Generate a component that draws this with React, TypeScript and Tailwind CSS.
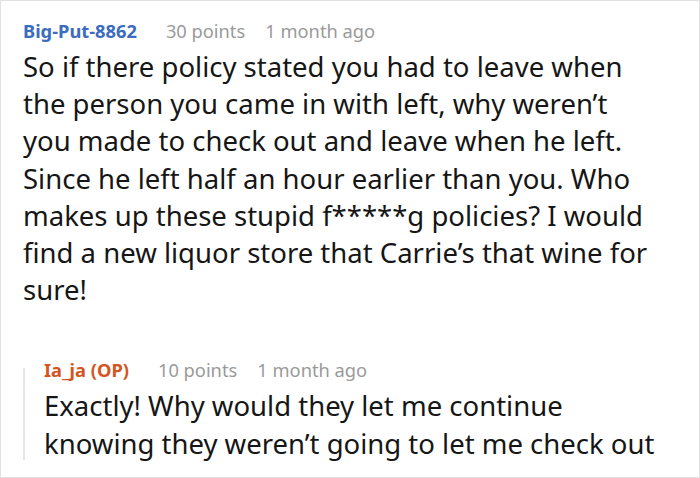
import React from 'react';

interface CommentProps {
  author: string;
  authorColor: string;
  points: string;
  time: string;
  lines: string[];
}

const CommentHeader: React.FC<{ author: string; authorColor: string; points: string; time: string }> = ({
  author,
  authorColor,
  points,
  time,
}) => (
  <div className="flex items-center text-[18.3px] leading-[24px]">
    <span className={`font-bold ${authorColor}`}>{author}</span>
    <span className="ml-[29px] text-[#9a9a9a]">{points}</span>
    <span className="ml-[20px] text-[#9a9a9a]">{time}</span>
  </div>
);

const CommentBody: React.FC<{ lines: string[] }> = ({ lines }) => (
  <p className="mt-[5px] text-[27.5px] leading-[37.2px] text-[#161616]">
    {lines.map((l, i) => (
      <span key={i} className="block whitespace-nowrap">
        {l}
      </span>
    ))}
  </p>
);

const Comment: React.FC<CommentProps> = ({ author, authorColor, points, time, lines }) => (
  <div>
    <CommentHeader author={author} authorColor={authorColor} points={points} time={time} />
    <CommentBody lines={lines} />
  </div>
);

export default function App() {
  return (
    <div
      className="w-[700px] h-[478px] overflow-hidden bg-white border border-[#e2e2e2] pl-[22px] pt-[18px]"
      style={{ fontFamily: '"Noto Sans", "Open Sans", sans-serif' }}
    >
      <Comment
        author="Big-Put-8862"
        authorColor="text-[#3a6cc0]"
        points="30 points"
        time="1 month ago"
        lines={[
          'So if there policy stated you had to leave when',
          'the person you came in with left, why weren’t',
          'you made to check out and leave when he left.',
          'Since he left half an hour earlier than you. Who',
          'makes up these stupid f*****g policies? I would',
          'find a new liquor store that Carrie’s that wine for',
          'sure!',
        ]}
      />
      <div className="mt-[50px] flex">
        <div className="w-[2px] bg-[#e4e4e4] mt-[10px] mb-[2px] shrink-0" />
        <div className="ml-[19px]">
          <Comment
            author="Ia_ja (OP)"
            authorColor="text-[#d4551f]"
            points="10 points"
            time="1 month ago"
            lines={['Exactly! Why would they let me continue', 'knowing they weren’t going to let me check out']}
          />
        </div>
      </div>
    </div>
  );
}
